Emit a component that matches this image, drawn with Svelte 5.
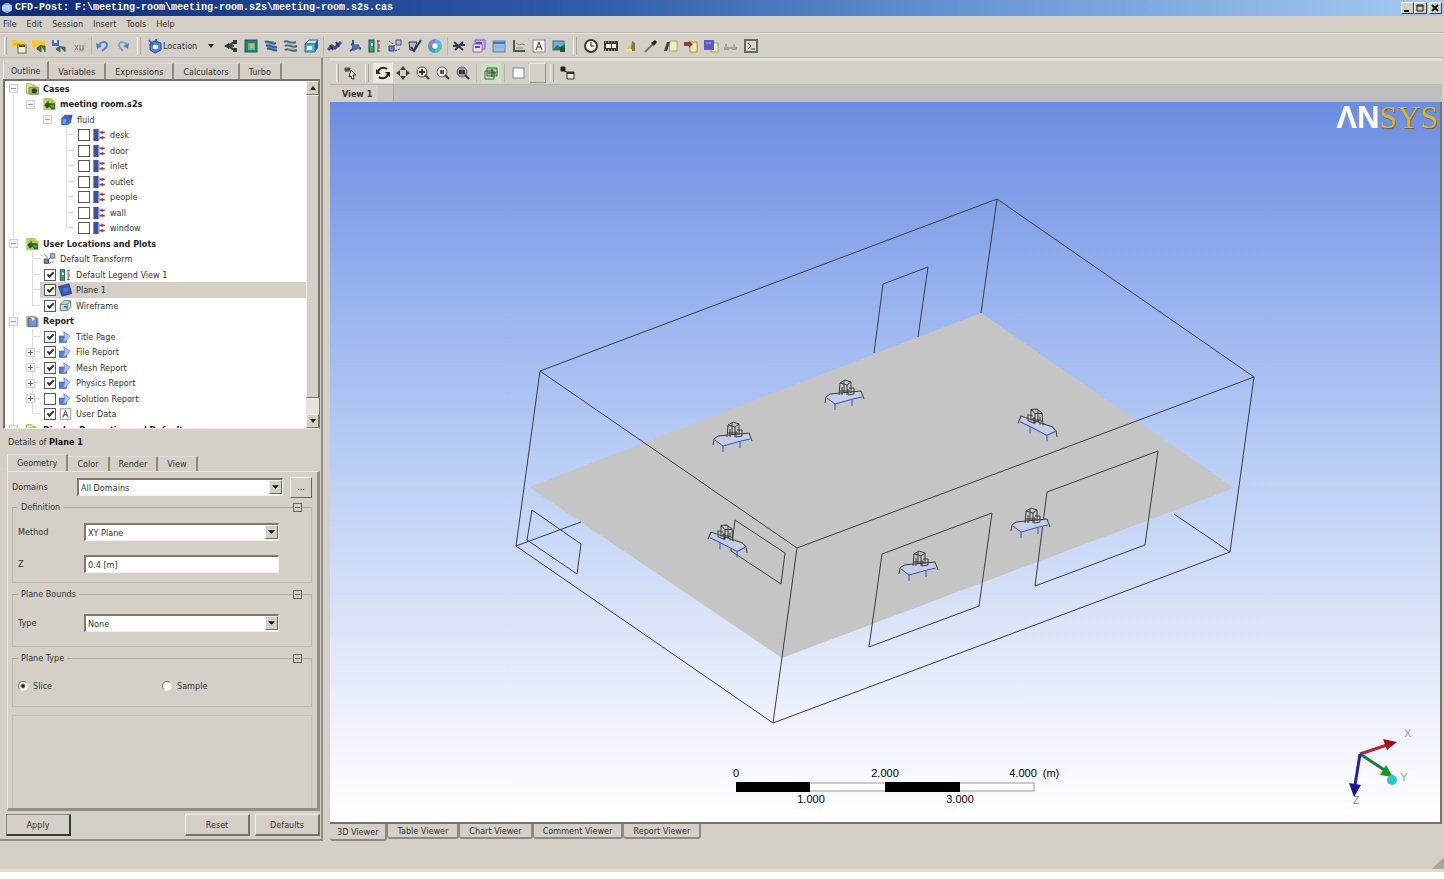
<script lang="ts">
  type Row = {
    label: string;
    level: number;
    icon: string;
    bold?: boolean;
    expander?: '+' | '-';
    checked?: boolean;
    line?: boolean;
    last?: boolean;
    selected?: boolean;
  };

  const menus = ['File', 'Edit', 'Session', 'Insert', 'Tools', 'Help'];
  const outlineTabs = ['Outline', 'Variables', 'Expressions', 'Calculators', 'Turbo'];
  const detailTabs = ['Geometry', 'Color', 'Render', 'View'];
  const viewerTabs = ['3D Viewer', 'Table Viewer', 'Chart Viewer', 'Comment Viewer', 'Report Viewer'];

  const boundaries = ['desk', 'door', 'inlet', 'outlet', 'people', 'wall', 'window'];

  const rows: Row[] = [
    { label: 'Cases', level: 0, icon: 'cases', bold: true, expander: '-' },
    { label: 'meeting room.s2s', level: 1, icon: 'room', bold: true, expander: '-' },
    { label: 'fluid', level: 2, icon: 'fluid', expander: '-' },
    ...boundaries.map((label, i) => ({
      label,
      level: 3,
      icon: 'boundary',
      checked: false,
      line: true,
      last: i === boundaries.length - 1
    })),
    { label: 'User Locations and Plots', level: 0, icon: 'room', bold: true, expander: '-' },
    { label: 'Default Transform', level: 1, icon: 'transform', line: true },
    { label: 'Default Legend View 1', level: 1, icon: 'legend', checked: true, line: true },
    { label: 'Plane 1', level: 1, icon: 'plane', checked: true, line: true, selected: true },
    { label: 'Wireframe', level: 1, icon: 'wire', checked: true, line: true, last: true },
    { label: 'Report', level: 0, icon: 'report', bold: true, expander: '-' },
    { label: 'Title Page', level: 1, icon: 'page', checked: true, line: true },
    { label: 'File Report', level: 1, icon: 'page', checked: true, line: true, expander: '+' },
    { label: 'Mesh Report', level: 1, icon: 'page', checked: true, line: true, expander: '+' },
    { label: 'Physics Report', level: 1, icon: 'page', checked: true, line: true, expander: '+' },
    { label: 'Solution Report', level: 1, icon: 'page', checked: false, line: true, expander: '+' },
    { label: 'User Data', level: 1, icon: 'text', checked: true, line: true, last: true },
    { label: 'Display Properties and Defaults', level: 0, icon: 'cases', bold: true, expander: '-' }
  ];

  const toolGroups = [
    ['vector', 'contour', 'stream', 'streams', 'cube'],
    ['particle', 'volume', 'legend', 'transform', 'clip', 'wheel'],
    ['calc', 'variable', 'table', 'chart', 'text', 'picture']
  ];
  const lastTools = ['clock', 'film', 'light', 'probe', 'caseA', 'caseB', 'caseC', 'sync', 'command'];

  // 16x16 icon bodies
  const icons: Record<string, string> = {
    open: '<path d="M1 2h5l1 2h7v5H1z" fill="#f4c93b"/><path d="M3 6h6" stroke="#d39a20"/><rect x="7" y="7" width="8" height="8" fill="#f2efe2" stroke="#6b6451"/><path d="M8 7h6v2H8z" fill="#5b5140"/>',
    load: '<path d="M1 2h5l1 1h7v6H1z" fill="#f4c93b"/><path d="M6 10l4-3v7l-4-3zM10 8h4v6" fill="#3e7a35" stroke="#4d5a2c"/>',
    save: '<path d="M1 2h7v6H1z" fill="#4a6fb0"/><path d="M3 2h3v3H3z" fill="#dce6f5"/><path d="M5 11l4-3v6zM9 9h5v5" fill="#3f5f82" stroke="#4d6a55"/>',
    image: '<path d="M2 4l1 1M3 13h11V5" fill="none" stroke="#bab5aa"/><path d="M4 7l3 5M7 7l-3 5M9 7v5h3V7" fill="none" stroke="#777"/>',
    undo: '<path d="M4 8c1-5 8-5 8-1 0 3-3 4-5 6" fill="none" stroke="#4d7fc6" stroke-width="2"/><path d="M1 5l1 6 5-3z" fill="#4d7fc6"/>',
    redo: '<path d="M12 8c-1-5-8-5-8-1 0 3 3 4 4 6" fill="none" stroke="#7da0ce" stroke-width="2"/><path d="M14 5l-1 6-5-3z" fill="#4d7fc6"/>',
    location: '<path d="M3 6l4-3 7 2v7l-6 3-5-3z" fill="#5a86d6" stroke="#1f4694"/><path d="M6 7h5v4H6z" fill="#eaf1ff"/><path d="M2 2l4 5M9 1l1 4" stroke="#2e62b8" stroke-width="2"/>',
    vector: '<path d="M4 8l8-4M4 8l8 4M2 8h9" fill="none" stroke="#334a44" stroke-width="2"/><path d="M1 8l5-3v6zM10 2h4v4h-4zM10 10h4v4h-4z" fill="#27403d"/>',
    contour: '<rect x="2" y="2" width="12" height="12" fill="#21807c" stroke="#245c50"/><path d="M5 5h7v7H5z" fill="#5fb98c"/><path d="M7 6h4v4H7z" fill="#d6b64b"/>',
    stream: '<path d="M2 3h9l3 9H5z" fill="#7ea2c6"/><path d="M2 4c4-2 6 3 11 1M3 8c4-2 6 3 11 1M4 11c4-2 6 3 10 1" fill="none" stroke="#3c5f92" stroke-width="2"/>',
    streams: '<path d="M1 4c4-3 6 3 12 0M2 8c4-3 6 3 12 0M2 12c4-3 6 3 12 0" fill="none" stroke="#406a90" stroke-width="2"/><path d="M4 6h7M5 11h7" stroke="#97a860"/>',
    cube: '<path d="M2 6l4-4h9l-3 4z" fill="#b8e4ee" stroke="#2e6a8c"/><path d="M12 6l3-4v8l-3 4z" fill="#25628d"/><path d="M2 6h10v8H2z" fill="#5db6cf" stroke="#2e6a8c"/><path d="M4 8h5v4H4z" fill="#e8fbff"/>',
    particle: '<path d="M1 12l4-4 3 2 6-6" fill="none" stroke="#3e5488" stroke-width="3"/><path d="M3 7l3 5M9 4l3 5" stroke="#23305c" stroke-width="2"/>',
    volume: '<path d="M6 2v10M3 13l9-6M4 6l10 5" stroke="#35507c" stroke-width="2"/><path d="M5 7l5-1 4 4-8 3z" fill="#4f75a8"/>',
    legend: '<rect x="2" y="2" width="5" height="12" fill="#35a085" stroke="#1c4f4c"/><path d="M4 5h2v3H4z" fill="#dff"/><path d="M11 2v12M10 3h3M10 13h3" stroke="#555"/><path d="M12 6v5" stroke="#c33"/>',
    transform: '<path d="M9 2h5v5H9z" fill="#b4bbda" stroke="#4a5484"/><path d="M2 8h5v5H2z" fill="#6a88c0" stroke="#33456e"/><path d="M2 3l4 3M8 13l5-2M7 8l3-2" stroke="#44517e" stroke-dasharray="2 1"/>',
    clip: '<path d="M2 4h8l-3 8H3z" fill="#aebcd5" stroke="#334"/><path d="M4 9l3 4 7-11" fill="none" stroke="#2b3a5e" stroke-width="2"/>',
    wheel: '<circle cx="8" cy="8" r="2" fill="#fff"/><path d="M8 3a5 5 0 0 1 5 5" fill="none" stroke="#58b7e8" stroke-width="4"/><path d="M13 8a5 5 0 0 1-5 5" fill="none" stroke="#55c3a0" stroke-width="4"/><path d="M8 13a5 5 0 0 1-5-5" fill="none" stroke="#35a0c8" stroke-width="4"/><path d="M3 8a5 5 0 0 1 5-5" fill="none" stroke="#9a79d0" stroke-width="4"/>',
    calc: '<path d="M3 4l9 8M12 4l-8 8M2 8h4M10 7h4" stroke="#2c3556" stroke-width="2"/>',
    variable: '<path d="M4 2h10v9H4z" fill="#c9b7ef" stroke="#6a5ad0"/><path d="M2 6h9v8H2z" fill="#f2dcdc" stroke="#8c6fc8"/><path d="M5 5h6M4 9h5" stroke="#4d49c2" stroke-width="2"/>',
    table: '<rect x="2" y="3" width="12" height="11" fill="#9fbbe2" stroke="#5a7fb8"/><path d="M2 4h12v2H2z" fill="#4672b8"/><path d="M2 9h12" stroke="#86a5d4"/>',
    chart: '<path d="M3 2v11h11" fill="none" stroke="#4c5a46" stroke-width="2"/><path d="M5 5l3 2 3-1 3 1M5 10h7" fill="none" stroke="#7d8b72"/>',
    text: '<rect x="2" y="2" width="12" height="12" fill="#fbfbf7" stroke="#8a8a84"/><path d="M5 12l3-8 3 8M6 9h4" fill="none" stroke="#333"/>',
    picture: '<rect x="2" y="3" width="11" height="9" fill="#69aee0" stroke="#3d7089"/><path d="M2 12l4-5 3 2 5-3v6z" fill="#23804a"/><path d="M9 9h5v5H9z" fill="#1d5a45"/>',
    clock: '<circle cx="8" cy="8" r="6" fill="#f4f3ec" stroke="#3a3a36" stroke-width="2"/><path d="M8 4v4h3" fill="none" stroke="#222"/>',
    film: '<rect x="1" y="3" width="14" height="10" fill="#39362f"/><path d="M3 6h5v4H3zM9 6h4v4H9z" fill="#f3f1e8"/><path d="M2 4h12M2 12h12" stroke="#ddd" stroke-dasharray="1 2"/>',
    light: '<path d="M3 12l7-9 3 9z" fill="#c9c06c"/><path d="M9 3l3 2v8H8z" fill="#7f7a4a"/><path d="M3 12h6" stroke="#f3e9a6" stroke-width="2"/>',
    probe: '<path d="M2 14l8-8" stroke="#7b7668" stroke-width="2"/><path d="M8 5l4-3 2 2-3 4z" fill="#222"/>',
    caseA: '<path d="M7 3h7v10H6z" fill="#eef0c4" stroke="#a8a256"/><path d="M1 13l3-9h3l-3 9z" fill="#3a4436"/>',
    caseB: '<path d="M7 4h7v10H7z" fill="#efe9b8" stroke="#a8963e"/><path d="M1 4h5v4H1zM6 3l4 3-4 4z" fill="#8f3f2a"/>',
    caseC: '<path d="M8 5h7v9H8z" fill="#f1eec8" stroke="#a8a05c"/><path d="M1 2h10v10H1z" fill="#5b5cc4"/><path d="M3 5h5" stroke="#8084dc" stroke-width="2"/>',
    sync: '<path d="M1 9h5v3H1zM9 9h5v3H9z" fill="#b39b93"/><path d="M3 6v4M11 6v4M4 10h8" stroke="#aaa59c" stroke-width="2"/>',
    command: '<rect x="2" y="2" width="12" height="12" fill="#d8d5cb" stroke="#6a685f" stroke-width="2"/><path d="M5 5l3 3-3 3M8 11h4" fill="none" stroke="#444"/>',
    select: '<path d="M2 3h5v3H2zM3 3v4" fill="#555" stroke="#555"/><path d="M8 5l5 5h-3l1 4-2 0-1-3-2 1z" fill="#f5f5f0" stroke="#333"/>',
    rotate: '<path d="M3 7c1-5 7-5 9-3" fill="none" stroke="#222" stroke-width="2"/><path d="M13 9c-1 5-7 5-9 3" fill="none" stroke="#222" stroke-width="2"/><path d="M1 4v5h5zM15 12V7h-5z" fill="#222"/>',
    pan: '<path d="M8 1l3 4H5zM8 15l3-4H5zM1 8l4-3v6zM15 8l-4-3v6z" fill="#3a3a36"/>',
    zoom: '<circle cx="7" cy="7" r="5" fill="#eceade" stroke="#4a4a46"/><path d="M10 10l4 4" stroke="#333" stroke-width="2"/><path d="M7 4v6M4 7h6" stroke="#333" stroke-width="2"/>',
    zoomBox: '<circle cx="7" cy="7" r="5" fill="#eceade" stroke="#6a6a66"/><path d="M10 10l4 4" stroke="#333" stroke-width="2"/><path d="M5 5h4v4H5z" fill="#555"/>',
    fit: '<circle cx="7" cy="7" r="5" fill="#9a9aa2" stroke="#6a6a70"/><path d="M10 10l4 4" stroke="#333" stroke-width="2"/><path d="M4 5h6v4H4z" fill="#3a3a44"/>',
    highlight: '<path d="M4 3h10v8H4z" fill="#a7c99f" stroke="#3b6a3c"/><path d="M2 6h9v8H2z" fill="none" stroke="#3b6a3c"/><path d="M9 4v8M5 8h8" stroke="#1f4a25"/>',
    viewport: '<rect x="2" y="3" width="11" height="10" fill="#fdfdfd" stroke="#7a80a0"/>',
    legendBox: '<path d="M1 2h4v4H1zM4 6l3 1" fill="#222" stroke="#222"/><path d="M7 7h7v7H7z" fill="#eceade" stroke="#333"/><path d="M7 8h7" stroke="#333" stroke-width="2"/>',
    cases: '<path d="M1 2h6l1 2h3v9H1z" fill="#e8ec8e" stroke="#a3a850"/><path d="M4 6h11v8H4z" fill="#a8b577" stroke="#70804c"/><circle cx="10" cy="10" r="3" fill="#274a25"/>',
    room: '<path d="M1 1h9l5 4v10H1z" fill="#b5cd62"/><path d="M2 9l5-5v3h7v7h-4l-2-3-3 2z" fill="#285f2c"/><path d="M9 9h4v3H9z" fill="#5b9b4e"/>',
    fluid: '<path d="M2 6l4-4h9l-2 9-4 3H2z" fill="#3f6bc4"/><path d="M4 7h4l-1 5H4z" fill="#7b9ee6"/><path d="M10 6l4-3" stroke="#1e3f8c"/>',
    boundary: '<path d="M1 1h6v14H1z" fill="#39539c"/><path d="M7 2h1v12H7z" fill="#8b9bd0"/><path d="M8 5h6M8 11h6" stroke="#a34848" stroke-width="2"/><path d="M11 3v4M11 9v4" stroke="#6c2f3d"/>',
    plane: '<path d="M0 4l12-3 3 11-11 3z" fill="#3558b8" stroke="#223f8e"/><path d="M5 6l6-1 1 4-6 2z" fill="#4f74d4"/>',
    wire: '<path d="M2 6l4-4h8v7l-4 4H2zM2 6h8v7M10 6l4-4" fill="#cfe3df" stroke="#43716f"/><path d="M6 9h4" stroke="#43716f" stroke-width="2"/>',
    report: '<path d="M1 2h10l4 3v10H1z" fill="#9fb3a0"/><path d="M3 5h10v9H3z" fill="#7d94c0" stroke="#51648c"/><path d="M6 3l5 2-3 3z" fill="#e6eefb"/>',
    page: '<path d="M1 7h8v7H1z" fill="#5b7fc8" stroke="#3a5aa2"/><path d="M6 2l7 5-5 6H5l2-5z" fill="#b4c3ea" stroke="#7187c4"/>'
  };

  // desks with a seated person, placed in the scene
  const desks = [
    { x: 733, y: 437 },
    { x: 845, y: 395 },
    { x: 919, y: 566 },
    { x: 1031, y: 523 },
    { x: 1037, y: 424, flip: true },
    { x: 727, y: 540, flip: true }
  ];

  let planeType = $state('Slice');
</script>

{#snippet icon(name: string)}
  <svg class="icon" viewBox="0 0 16 16" aria-hidden="true">{@html icons[name]}</svg>
{/snippet}

{#snippet tool(name: string)}
  <button class="tool" aria-label={name}>{@render icon(name)}</button>
{/snippet}

{#snippet dropdown(id: string, value: string)}
  <span class="dropdown">
    <select {id}><option>{value}</option></select>
    <svg class="arrow" viewBox="0 0 12 14" aria-hidden="true"><path d="M2 5h8l-4 4z" fill="#111" /></svg>
  </span>
{/snippet}

<div class="window">
  <header class="titlebar">
    <svg class="app-icon" viewBox="0 0 12 12" aria-hidden="true">
      <circle cx="6" cy="6" r="5" fill="#8ea9e4" />
      <path d="M1 4h10M1 6h10M1 8h10" stroke="#e6edfb" />
    </svg>
    <span class="title">CFD-Post: F:\meeting-room\meeting-room.s2s\meeting-room.s2s.cas</span>
    <div class="window-buttons">
      <button aria-label="Minimize"><svg viewBox="0 0 10 8"><path d="M2 7h5" stroke="#111" stroke-width="2" /></svg></button>
      <button aria-label="Restore"><svg viewBox="0 0 10 8"><path d="M2 1h6v6H2zM2 2h6" fill="none" stroke="#111" /></svg></button>
      <button aria-label="Close"><svg viewBox="0 0 10 8"><path d="M2 1l6 6M8 1l-6 6" stroke="#111" stroke-width="2" /></svg></button>
    </div>
  </header>

  <nav class="menubar">
    {#each menus as menu}
      <button>{menu}</button>
    {/each}
  </nav>

  <div class="toolbar">
    <span class="grip"></span>
    {#each ['open', 'load', 'save', 'image'] as name}{@render tool(name)}{/each}
    <span class="sep"></span>
    {@render tool('undo')}
    {@render tool('redo')}
    <span class="grip wide"></span>
    <button class="location">
      {@render icon('location')}
      <span>Location</span>
      <svg class="caret" viewBox="0 0 8 6" aria-hidden="true"><path d="M1 1h6L4 5z" fill="#222" /></svg>
    </button>
    {#each toolGroups as group, i}
      {#if i > 0}<span class="sep"></span>{/if}
      {#each group as name}{@render tool(name)}{/each}
    {/each}
    <span class="grip wide"></span>
    {#each lastTools as name}{@render tool(name)}{/each}
  </div>

  <main class="workspace">
    <aside class="sidebar">
      <div class="tabs outline-tabs">
        {#each outlineTabs as tab, i}
          <button class:active={i === 0}>{tab}</button>
        {/each}
      </div>

      <div class="tree">
        <ul>
          {#each rows as row, i}
            <li class:line={row.line} class:last={row.last} class:bold={row.bold} style="--level: {row.level}">
              <span class="slot">
                {#if row.expander}
                  <button class="expander" class:plus={row.expander === '+'} aria-label="Toggle {row.label}"></button>
                {/if}
              </span>
              <span class="item" class:selected={row.selected}>
                {#if row.checked !== undefined}
                  <input type="checkbox" id="row-{i}" checked={row.checked} />
                {/if}
                {@render icon(row.icon)}
                <label for={row.checked !== undefined ? `row-${i}` : undefined}>{row.label}</label>
              </span>
            </li>
          {/each}
        </ul>
        <div class="scrollbar">
          <button aria-label="Scroll up"><svg viewBox="0 0 8 6"><path d="M1 5h6L4 1z" fill="#222" /></svg></button>
          <span class="thumb"></span>
          <span class="track"></span>
          <button aria-label="Scroll down"><svg viewBox="0 0 8 6"><path d="M1 1h6L4 5z" fill="#222" /></svg></button>
        </div>
      </div>

      <h2>Details of <b>Plane 1</b></h2>

      <div class="tabs">
        {#each detailTabs as tab, i}
          <button class:active={i === 0}>{tab}</button>
        {/each}
      </div>

      <div class="panel">
        <div class="field domains">
          <label for="domains">Domains</label>
          {@render dropdown('domains', 'All Domains')}
          <button class="more">...</button>
        </div>

        <fieldset>
          <legend>Definition</legend>
          <button class="fold" aria-label="Fold Definition"></button>
          <div class="field">
            <label for="method">Method</label>
            {@render dropdown('method', 'XY Plane')}
          </div>
          <div class="field">
            <label for="z">Z</label>
            <input id="z" type="text" value="0.4 [m]" />
          </div>
        </fieldset>

        <fieldset class="bounds">
          <legend>Plane Bounds</legend>
          <button class="fold" aria-label="Fold Plane Bounds"></button>
          <div class="field">
            <label for="type">Type</label>
            {@render dropdown('type', 'None')}
          </div>
        </fieldset>

        <fieldset class="plane-type">
          <legend>Plane Type</legend>
          <button class="fold" aria-label="Fold Plane Type"></button>
          <div class="radios">
            {#each ['Slice', 'Sample'] as option}
              <label><input type="radio" name="plane-type" value={option} bind:group={planeType} />{option}</label>
            {/each}
          </div>
        </fieldset>

        <div class="filler"></div>
      </div>

      <div class="actions">
        <button class="default">Apply</button>
        <span class="spacer"></span>
        <button>Reset</button>
        <button>Defaults</button>
      </div>
    </aside>

    <section class="viewer">
      <div class="toolbar view-tools">
        <span class="grip"></span>
        {@render tool('select')}
        <span class="grip wide"></span>
        <span class="pressed">{@render tool('rotate')}</span>
        {#each ['pan', 'zoom', 'zoomBox', 'fit'] as name}{@render tool(name)}{/each}
        <span class="sep view-sep"></span>
        <span class="pressed green">{@render tool('highlight')}</span>
        <span class="sep view-sep"></span>
        {@render tool('viewport')}
        <button class="blank" aria-label="Viewport layout"></button>
        <span class="grip wide"></span>
        {@render tool('legendBox')}
      </div>

      <div class="view-tabs"><button>View 1</button></div>

      <div class="canvas">
        <svg class="scene" viewBox="330 102 1110 720" role="img" aria-label="Meeting room wireframe">
          <polygon points="529,487 981,313 1234,488 782,658" fill="#c5c5c5" />
          <g class="edges">
            <!-- room box -->
            <path d="M540 371L997 199L1254 377L797 548Z" />
            <path d="M540 371L516 546L773 723L1230 552L1254 377M797 548L773 723" />
            <path d="M997 199L981 313M516 546L581 522M1174 514L1230 552" />
            <!-- door -->
            <path d="M874 353L883 284L928 267L918 337" />
            <!-- inlet and outlet -->
            <path d="M532 510L581 544L577 574L527 540Z" />
            <path d="M735 520L785 553L781 584L731 551Z" />
            <!-- windows -->
            <path d="M882 554L992 513L979 606L869 647Z" />
            <path d="M1047 492L1158 451L1145 545L1035 586Z" />
          </g>
          {#each desks as desk}
            <g class="desk" transform="translate({desk.x} {desk.y}) {desk.flip ? 'skewY(14) scale(-1 1)' : ''}">
              <path class="top" d="M-19 2L-10 9L7 5L18 2L15 -3L-15 0Z" />
              <path class="blue" d="M-18 3L-10 9L8 4L17 2M-10 9V15M7 5V11" />
              <path d="M-20 8L-19 2L-15 -1L16 -4L19 4M-6 0L-5 -12L0 -15L6 -13V-2M-5 -12L2 -10L6 -13M2 -10V0M-3 -8V0M4 -7L9 -7V-1L3 0V-6M-6 -4H5M-1 -14V-2" />
            </g>
          {/each}
          <g class="ruler">
            <rect x="737" y="783" width="297" height="8" fill="#fff" stroke="#999" />
            <rect x="736" y="782" width="74" height="10" />
            <rect x="885" y="782" width="75" height="10" />
            <text x="736" y="777">0</text>
            <text x="885" y="777">2.000</text>
            <text x="1023" y="777">4.000</text>
            <text x="1051" y="777">(m)</text>
            <text x="811" y="803">1.000</text>
            <text x="960" y="803">3.000</text>
          </g>
        </svg>

        <div class="logo" aria-label="ANSYS"><b>ΛN</b><span>SYS</span></div>

        <svg class="triad" viewBox="0 0 76 86" aria-label="Axes">
          <path d="M20 33L50 23" stroke="#b02a35" stroke-width="3" />
          <path d="M43 18L57 21L47 29Z" fill="#a01018" />
          <path d="M20 33L46 50" stroke="#1f7a34" stroke-width="3" />
          <path d="M46 44L53 56L40 54Z" fill="#15982a" />
          <circle cx="52" cy="59" r="5" fill="#2cc7c4" />
          <path d="M20 33L15 64" stroke="#2322a0" stroke-width="3" />
          <path d="M9 62L21 64L14 76Z" fill="#16129a" />
          <text x="68" y="16" fill="#e08090">X</text>
          <text x="64" y="60" fill="#70c070">Y</text>
          <text x="16" y="83" fill="#7a80d0">Z</text>
        </svg>
      </div>

      <div class="viewer-tabs">
        {#each viewerTabs as tab, i}
          <button class:active={i === 0}>{tab}</button>
        {/each}
      </div>
    </section>
  </main>

  <footer class="statusbar">
    <svg viewBox="0 0 12 12" aria-hidden="true"><path d="M12 0v12H0z" fill="#aaa69b" /></svg>
  </footer>
</div>

<style>
  :global(body) {
    margin: 0;
    background: #fff;
  }

  .window {
    box-sizing: border-box;
    display: flex;
    flex-direction: column;
    min-height: calc(100vh - 10px);
    background: #d4d0c8;
    color: #333;
    font: 9px/12px 'DejaVu Sans Condensed', 'DejaVu Sans', sans-serif;
  }

  button,
  input,
  select {
    box-sizing: border-box;
    margin: 0;
    padding: 0;
    border: 0;
    background: none;
    color: inherit;
    font: inherit;
  }

  .icon {
    display: block;
    flex: none;
    width: 16px;
    height: 16px;
  }

  .spacer {
    flex: 1;
  }

  /* Title bar */
  .titlebar {
    display: flex;
    align-items: center;
    gap: 2px;
    height: 16px;
    padding: 0 2px 0 1px;
    background: linear-gradient(90deg, #0f2c78 0%, #2f5ba8 40%, #6d9bd8 70%, #a6caf0 100%);
  }

  .app-icon {
    width: 12px;
    height: 12px;
  }

  .title {
    flex: 1;
    color: #fff;
    font: bold 10px/18px 'Liberation Mono', monospace;
    white-space: pre;
  }

  .window-buttons {
    display: flex;
  }

  .window-buttons button {
    width: 13px;
    height: 12px;
    border: 1px solid;
    border-color: #fff #404040 #404040 #fff;
    background: #d4d0c8;
  }

  .window-buttons button:last-child {
    margin-left: 2px;
  }

  .window-buttons svg {
    display: block;
    width: 10px;
    height: 8px;
  }

  /* Menus and toolbars */
  .menubar {
    display: flex;
    gap: 10px;
    height: 17px;
    padding: 0 3px;
    border-bottom: 1px solid #bfbbb2;
    box-sizing: border-box;
  }

  .toolbar {
    display: flex;
    align-items: center;
    box-sizing: border-box;
    height: 25px;
    border-top: 1px solid #e6e3da;
    border-bottom: 1px solid #b9b5ac;
  }

  .tool {
    display: grid;
    place-items: center;
    flex: none;
    width: 20px;
    height: 20px;
  }

  .grip {
    flex: none;
    width: 1px;
    height: 18px;
    margin: 0 2px 0 4px;
    border-left: 1px solid #f4f2ec;
    border-right: 1px solid #aaa69c;
  }

  .grip.wide {
    margin: 0 4px;
    width: 2px;
  }

  .sep {
    flex: none;
    width: 1px;
    height: 18px;
    margin: 0 1px 0 2px;
    background: #bab6ac;
  }

  .sep.view-sep {
    margin: 0 4px 0 3px;
  }

  .location {
    display: flex;
    align-items: center;
    width: 76px;
    padding-left: 2px;
  }

  .location span {
    flex: 1;
    text-align: left;
  }

  .caret {
    width: 8px;
    height: 6px;
    margin-right: 6px;
  }

  .workspace {
    display: flex;
    flex: 1;
    gap: 7px;
    padding-right: 2px;
  }

  /* Left side */
  .sidebar {
    display: flex;
    flex-direction: column;
    box-sizing: border-box;
    width: 323px;
    flex: none;
    padding: 3px 1px 3px 3px;
    border-right: 2px solid #918d84;
    border-bottom: 2px solid #918d84;
  }

  .tabs {
    display: flex;
    height: 17px;
    margin-left: 4px;
  }

  .tabs button {
    box-sizing: border-box;
    margin-top: 2px;
    padding: 0 9px;
    border-top: 1px solid #e0ddd4;
    border-right: 2px solid #8d897f;
    line-height: 12px;
  }

  .tabs button.active {
    margin-top: 0;
    border-left: 1px solid #f2f0ea;
  }

  .outline-tabs {
    height: 18px;
    margin-left: 0;
  }

  .outline-tabs button.active {
    padding: 0 7px;
  }

  .tree {
    display: flex;
    height: 347px;
    border: 1px solid #77736a;
    border-bottom-color: #eceae2;
    border-width: 2px 1px 1px 2px;
    background: #fff;
    overflow: hidden;
  }

  ul {
    position: relative;
    flex: 1;
    margin: 0;
    padding: 0;
    list-style: none;
  }

  ul::before {
    content: '';
    position: absolute;
    left: 8px;
    top: 8px;
    bottom: 0;
    border-left: 1px solid #dcdcdc;
  }

  li {
    position: relative;
    display: flex;
    align-items: center;
    height: 15px;
    padding-left: calc(4px + 17px * var(--level));
    white-space: nowrap;
  }

  li:nth-child(even) {
    height: 16px;
  }

  li.line::before,
  li.line::after {
    content: '';
    position: absolute;
    left: calc(10px + 17px * var(--level));
    top: 0;
    bottom: 0;
    border-left: 1px solid #dcdcdc;
  }

  li.line::after {
    bottom: 50%;
    width: 8px;
    border-left: 0;
    border-bottom: 1px solid #dcdcdc;
  }

  li.line.last::before {
    bottom: 50%;
  }

  .slot {
    position: relative;
    z-index: 1;
    display: flex;
    width: 14px;
  }

  .expander {
    width: 9px;
    height: 9px;
    border: 1px solid #d0d0d0;
    background: linear-gradient(#999, #999) center / 5px 1px no-repeat #f2f2f2;
  }

  .expander.plus {
    background:
      linear-gradient(#666, #666) center / 5px 1px no-repeat,
      linear-gradient(#666, #666) center / 1px 5px no-repeat,
      #f2f2f2;
  }

  .item {
    display: flex;
    flex: 1;
    align-items: center;
    gap: 3px;
    height: 100%;
    padding-left: 2px;
  }

  .item.selected {
    background: #d4d0c8;
  }

  .item .icon {
    width: 15px;
    height: 14px;
  }

  .bold {
    font-weight: bold;
    color: #222;
  }

  input[type='checkbox'] {
    appearance: none;
    display: grid;
    place-items: center;
    width: 12px;
    height: 12px;
    margin-left: 2px;
    margin-right: -1px;
    border: 1px solid #5a5a5a;
    background: #fff;
  }

  input[type='checkbox']:checked::before {
    content: '';
    width: 5px;
    height: 2px;
    margin-top: -2px;
    border-left: 2px solid #333;
    border-bottom: 2px solid #333;
    rotate: -45deg;
  }

  .scrollbar {
    display: flex;
    flex-direction: column;
    width: 13px;
    background: #e8e5de;
  }

  .scrollbar button {
    height: 14px;
    border: 1px solid;
    border-color: #f4f2ec #77736a #77736a #f4f2ec;
    background: #d4d0c8;
  }

  .scrollbar svg {
    display: block;
    width: 8px;
    height: 6px;
    margin: auto;
  }

  .thumb {
    flex: 1;
    border: 1px solid;
    border-color: #f4f2ec #77736a #77736a #f4f2ec;
    background: #d4d0c8;
  }

  .track {
    height: 16px;
  }

  h2 {
    margin: 7px 4px 6px 5px;
    font-size: 9px;
    font-weight: normal;
    line-height: 12px;
  }

  h2 b {
    color: #111;
  }

  .panel {
    display: flex;
    flex: 1;
    flex-direction: column;
    margin-left: 4px;
    padding: 5px 5px 0 4px;
    border: 1px solid #ebe8e0;
    border-right: 3px solid #918d84;
    border-bottom: 3px solid #918d84;
  }

  .field {
    display: flex;
    align-items: center;
    height: 20px;
  }

  .field label {
    width: 66px;
  }

  .dropdown {
    position: relative;
    display: flex;
    flex: 1;
  }

  select,
  input[type='text'] {
    flex: 1;
    height: 18px;
    padding: 0 2px;
    border: 1px solid;
    border-width: 2px 1px 1px 2px;
    border-color: #7d796f #f2f0ea #f2f0ea #7d796f;
    border-radius: 0;
    background: #fff;
    appearance: none;
  }

  .arrow {
    position: absolute;
    right: 1px;
    top: 2px;
    width: 13px;
    height: 14px;
    box-sizing: border-box;
    border: 1px solid;
    border-color: #f4f2ec #6a665c #6a665c #f4f2ec;
    background: #d4d0c8;
    pointer-events: none;
  }

  .more {
    width: 22px;
    height: 21px;
    margin-left: 7px;
    border: 1px solid;
    border-color: #f4f2ec #6a665c #6a665c #f4f2ec;
  }

  fieldset {
    position: relative;
    display: flex;
    flex-direction: column;
    gap: 12px;
    min-width: 0;
    margin: 4px 0 5px;
    padding: 9px 32px 8px 5px;
    border: 1px solid #bfbbb1;
    border-top-color: #aeaaa0;
  }

  legend {
    margin-left: 0;
    padding: 0 3px;
  }

  .domains label {
    width: 65px;
  }

  .bounds {
    margin-top: 0;
    padding-top: 13px;
    padding-bottom: 13px;
  }

  .plane-type {
    margin-top: 0;
    padding-top: 12px;
    padding-bottom: 10px;
  }

  .fold {
    position: absolute;
    right: 9px;
    top: -10px;
    width: 9px;
    height: 9px;
    border: 1px solid #6b675d;
    background: linear-gradient(#6b675d, #6b675d) center / 5px 1px no-repeat #d4d0c8;
  }

  .radios {
    display: grid;
    grid-template-columns: 144px 1fr;
    height: 20px;
    align-items: center;
  }

  .radios label {
    display: flex;
    align-items: center;
    gap: 5px;
  }

  input[type='radio'] {
    appearance: none;
    width: 10px;
    height: 10px;
    border: 1px solid;
    border-color: #77736a #f4f2ec #f4f2ec #77736a;
    border-radius: 50%;
    background: #fff;
  }

  input[type='radio']:checked {
    background: radial-gradient(#111 1px, #fff 3px);
  }

  .filler {
    flex: 1;
    margin-top: 3px;
    border: 1px solid #c8c4ba;
    border-bottom: 0;
  }

  .actions {
    display: flex;
    gap: 5px;
    padding: 3px 0 0 3px;
  }

  .actions button {
    width: 65px;
    height: 22px;
    border: 1px solid;
    border-width: 1px 2px 2px 1px;
    border-color: #f4f2ec #77736a #77736a #f4f2ec;
  }

  .actions .default {
    border-color: #8d897f #3c3a35 #3c3a35 #8d897f;
  }

  /* 3D view */
  .viewer {
    display: flex;
    flex: 1;
    flex-direction: column;
    min-width: 0;
  }

  .view-tools {
    height: 27px;
    padding-left: 2px;
    border-top: 3px solid #e4e1d6;
  }

  .pressed {
    background: #ebe9e2;
  }

  .pressed.green {
    background: #cfe0c6;
  }

  .blank {
    width: 17px;
    height: 20px;
    border: 1px solid;
    border-color: #eceae2 #99958b #99958b #eceae2;
  }

  .view-tabs {
    display: flex;
    height: 17px;
    background: #bfbfbf;
  }

  .view-tabs button {
    width: 64px;
    padding-left: 12px;
    border-right: 1px solid #a9a69e;
    background: linear-gradient(90deg, #d4d0c8 48px, #c9c6bf 48px);
    text-align: left;
    font-weight: bold;
  }

  .canvas {
    position: relative;
    flex: 1;
    display: flex;
    border-right: 2px solid #77736a;
    border-bottom: 2px solid #77736a;
    background: linear-gradient(#6c8ce0 0%, #94b0ee 25%, #b9cef5 50%, #dae3f8 72%, #f1f4fd 88%, #fff 100%);
  }

  .scene {
    width: 100%;
    height: 100%;
  }

  .edges path,
  .desk path {
    fill: none;
    stroke: #3c3c3c;
    stroke-width: 1px;
  }

  .desk path.top {
    fill: #c4cfe6;
    stroke: none;
  }

  .desk path.blue {
    stroke: #3050c0;
  }

  .ruler text,
  .triad text {
    font: 11px 'Liberation Sans', sans-serif;
    text-anchor: middle;
  }

  .logo {
    position: absolute;
    top: 0;
    right: 2px;
    display: flex;
    align-items: baseline;
  }

  .logo b {
    color: #fff;
    font: bold 31px/31px 'Liberation Sans', sans-serif;
  }

  .logo span {
    color: #d9b23c;
    font: 32px/31px 'Liberation Serif', serif;
    text-shadow: 1px 1px 0 #6e6638;
  }

  .triad {
    position: absolute;
    right: 24px;
    bottom: 15px;
    width: 76px;
    height: 86px;
    overflow: visible;
  }

  .viewer-tabs {
    display: flex;
    height: 17px;
  }

  .viewer-tabs button {
    height: 15px;
    padding: 0 9px;
    border: 1px solid #8d897f;
    border-width: 0 2px 2px 1px;
    border-radius: 0 0 3px 3px;
  }

  .viewer-tabs button.active {
    height: 17px;
    padding: 0 7px;
    border-left: 0;
  }

  .statusbar {
    display: flex;
    align-items: flex-end;
    justify-content: flex-end;
    box-sizing: border-box;
    height: 31px;
    border-bottom: 3px solid #dedbd0;
  }

  .statusbar svg {
    width: 12px;
    height: 12px;
  }
</style>
